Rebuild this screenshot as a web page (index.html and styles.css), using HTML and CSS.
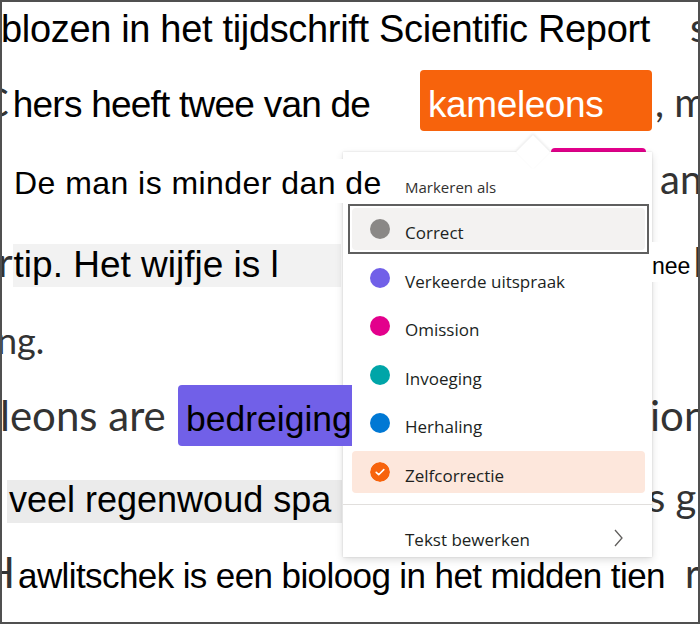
FILE: index.html
```html
<!DOCTYPE html>
<html lang="nl">
<head>
<meta charset="utf-8">
<title>Markeren als</title>
<link rel="stylesheet" href="styles.css">
</head>
<body>
<div class="page">
  <div class="row r1">
    <span class="t t1">blozen in het tijdschrift Scientific Report</span>
    <span class="g f1">s</span>
  </div>
  <div class="row r2">
    <div class="l2"><span class="g cut-c">C</span><span class="t t2">hers heeft twee van de</span></div>
    <span class="hl orange"><span class="t tk">kameleons</span></span>
    <span class="g f2">, m</span>
  </div>
  <div class="row r3">
    <span class="t t3 over">De man is minder dan de</span>
    <span class="pink"></span>
    <span class="g f3">an</span>
  </div>
  <div class="row r4">
    <span class="g cut-r">r</span>
    <span class="t t4 shade1">tip. Het wijfje is l</span>
    <span class="f4 over"><span class="t nee">nee</span><span class="g">h</span></span>
  </div>
  <div class="row r5">
    <span class="g g5">ng.</span>
  </div>
  <div class="row r6">
    <span class="g l6">leons are</span>
    <span class="hl purple over"><span class="t tb">bedreiging</span></span>
    <span class="g f6">ion</span>
  </div>
  <div class="row r7">
    <span class="t t7 shade2">veel regenwoud spa</span>
    <span class="g f7">s g</span>
  </div>
  <div class="row r8">
    <span class="g cut-h">H</span>
    <span class="t t8">awlitschek is een bioloog in het midden tien</span>
    <span class="g f8">r</span>
  </div>

  <div class="menu">
    <div class="beak"></div>
    <div class="menu-head">Markeren als</div>
    <div class="items">
      <div class="item focus"><span class="dot c-gray"></span><span class="label">Correct</span></div>
      <div class="item"><span class="dot c-purple"></span><span class="label">Verkeerde uitspraak</span></div>
      <div class="item"><span class="dot c-pink"></span><span class="label">Omission</span></div>
      <div class="item"><span class="dot c-teal"></span><span class="label">Invoeging</span></div>
      <div class="item"><span class="dot c-blue"></span><span class="label">Herhaling</span></div>
      <div class="item selected">
        <svg class="dot" viewBox="0 0 20 20" width="20" height="20"><circle cx="10" cy="10" r="10" fill="#f7630c"/><path d="M6.2 10.3 L8.7 12.7 L13.8 7.6" fill="none" stroke="#fff" stroke-width="1.6" stroke-linecap="round" stroke-linejoin="round"/></svg>
        <span class="label">Zelfcorrectie</span>
      </div>
    </div>
    <div class="divider"></div>
    <div class="edit">
      <span class="label">Tekst bewerken</span>
      <svg class="chev" viewBox="0 0 9 18" width="9" height="18"><path d="M1 1 L8 9 L1 17" fill="none" stroke="#605e5c" stroke-width="1.3"/></svg>
    </div>
  </div>
</div>
</body>
</html>
```
FILE: styles.css
```css
* { box-sizing: border-box; }
html, body { margin: 0; padding: 0; background: #fff; }

.page {
  position: relative;
  width: 700px;
  height: 624px;
  overflow: hidden;
  background: #fff;
}
.page::after {
  content: "";
  position: absolute;
  inset: 0;
  border: 2px solid #505050;
  pointer-events: none;
  z-index: 5;
}

.row {
  display: flex;
  align-items: baseline;
  white-space: nowrap;
  line-height: 1;
  font-size: 10px;
}
.t {
  font-family: "Liberation Sans", Arial, sans-serif;
  color: #000;
  line-height: 1;
}
.g {
  font-family: Lato, "Open Sans", sans-serif;
  color: #333;
  font-size: 40px;
  line-height: 1;
}
.over { position: relative; z-index: 2; }

/* row 1 */
.r1 { height: 70px; padding-top: 6.5px; }
.t1 { font-size: 38px; letter-spacing: -0.33px; margin-left: 1px; }
.f1 { margin-left: auto; width: 10px; flex-shrink: 0; }

/* row 2 */
.r2 { height: 78px; }
.l2 { width: 420px; flex-shrink: 0; }
.cut-c { margin-left: -18px; }
.t2 { font-size: 37px; letter-spacing: -0.77px; margin-left: 4px; }
.hl { flex-shrink: 0; }
.orange {
  width: 232px;
  padding: 15.7px 0 8.3px 8px;
  background: #f7630c;
  border-radius: 4px;
}
.tk { color: #fff; font-size: 37px; letter-spacing: -0.4px; }
.f2 { margin-left: 3px; }

/* row 3 */
.r3 { height: 90px; padding-top: 10.5px; }
.t3 {
  font-size: 32px;
  letter-spacing: 0.45px;
  background: #fff;
  padding: 8px 2px 4px 14px;
}
.pink {
  align-self: flex-start;
  margin-top: -10.5px;
  margin-left: auto;
  margin-right: 14px;
  width: 95px;
  height: 40px;
  background: #e3008c;
  border-radius: 4px 4px 0 0;
  flex-shrink: 0;
}
.f3 { width: 40px; flex-shrink: 0; }

/* row 4 */
.r4 { height: 62px; padding-top: 3.5px; }
.cut-r { margin-left: -2px; }
.t4 { font-size: 37px; }
.shade1 {
  width: 328px;
  padding: 1.7px 0 4.3px 1px;
  background: #f2f2f2;
  flex-shrink: 0;
}
.f4 { margin-left: auto; width: 48px; flex-shrink: 0; background: #fff; }
.nee { font-size: 23px; margin-right: 3px; position: relative; top: -3px; }

/* row 5 */
.r5 { height: 85px; padding-top: 22.1px; }
.g5 { font-size: 36px; margin-left: -3px; }

/* row 6 */
.r6 { height: 85px; }
.l6 { width: 178px; text-align: right; padding-right: 13px; font-size: 42px; flex-shrink: 0; }
.purple {
  width: 174px;
  padding: 17px 0 8.5px 8px;
  background: #7160e8;
  border-radius: 4px 0 0 4px;
}
.tb { font-size: 35.5px; }
.f6 { margin-left: auto; width: 50px; font-size: 42px; flex-shrink: 0; }

/* row 7 */
.r7 { height: 75px; padding-top: 6.5px; }
.t7 { font-size: 36px; }
.shade2 {
  margin-left: 7px;
  width: 335px;
  padding: 1.5px 0 5.5px 2px;
  background: #ebebeb;
  flex-shrink: 0;
}
.f7 { margin-left: auto; width: 52px; flex-shrink: 0; }

/* row 8 */
.r8 { height: 79px; padding-top: 5.7px; }
.cut-h { font-size: 42px; margin-left: -17px; }
.t8 { font-size: 35px; letter-spacing: -0.6px; margin-left: 3px; }
.f8 { margin-left: auto; width: 15px; flex-shrink: 0; }

/* menu */
.menu {
  position: absolute;
  left: 343px;
  top: 152px;
  width: 309px;
  height: 405px;
  background: #fff;
  z-index: 1;
  box-shadow: 0 0 2px rgba(0, 0, 0, 0.14), 0 3px 8px rgba(0, 0, 0, 0.13);
  font-family: "Open Sans", "Noto Sans", sans-serif;
  color: #201f1e;
}
.beak {
  position: absolute;
  left: 178px;
  top: -12px;
  width: 24px;
  height: 24px;
  background: #fff;
  transform: rotate(45deg);
  box-shadow: -1px -1px 3px rgba(0, 0, 0, 0.09);
  z-index: -1;
}
.menu-head {
  padding: 25px 0 0 62px;
  font-size: 15px;
  line-height: 20px;
  color: #323130;
  margin-bottom: 11px;
}
.items {
  display: flex;
  flex-direction: column;
  gap: 6.6px;
  padding: 0 7px 0 9px;
}
.item {
  position: relative;
  height: 42px;
  display: flex;
  align-items: center;
  padding-left: 18px;
  border-radius: 4px;
  font-size: 17px;
}
.item.focus { background: #f3f2f1; }
.item.focus::before {
  content: "";
  position: absolute;
  left: -4px;
  right: -4px;
  top: -4px;
  bottom: -4px;
  border: 2px solid #5f5f5f;
  pointer-events: none;
}
.item.selected { background: #fde7dc; }
.dot {
  width: 20px;
  height: 20px;
  border-radius: 50%;
  flex-shrink: 0;
  margin-right: 15px;
}
.label { padding-top: 8px; line-height: 24px; }
.c-gray { background: #8a8886; }
.c-purple { background: #7160e8; }
.c-pink { background: #e3008c; }
.c-teal { background: #00a5a8; }
.c-blue { background: #0078d4; }
.divider {
  margin-top: 11px;
  height: 1px;
  background: #e1dfdd;
}
.edit {
  height: 62px;
  display: flex;
  align-items: center;
  padding-left: 62px;
  font-size: 17px;
}
.chev { margin-left: auto; margin-right: 29px; margin-top: 4px; }
```
